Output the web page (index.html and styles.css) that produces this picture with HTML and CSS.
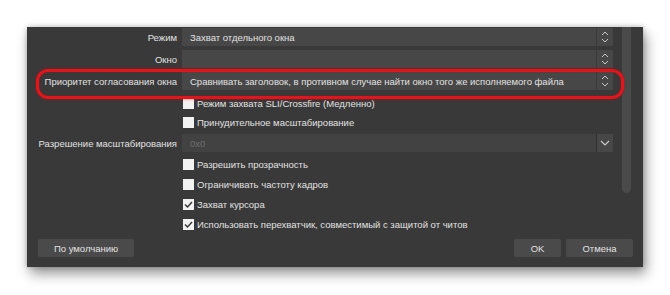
FILE: index.html
```html
<!DOCTYPE html>
<html lang="ru">
<head>
<meta charset="UTF-8" />
<title>Свойства захвата окна</title>
<link rel="stylesheet" href="styles.css">
</head>
<body>

<div class="dialog">
  <div class="scroll-area">
    <div class="form">
      <div class="label">Режим</div>
      <div class="combo">
        <span class="combo-text">Захват отдельного окна</span>
        <span class="combo-btn">
          <svg viewBox="0 0 8 14" width="8" height="14"><path d="M1 5l3-3 3 3M1 9l3 3 3-3" fill="none" stroke="#c8c8c8" stroke-width="1"/></svg>
        </span>
      </div>

      <div class="label">Окно</div>
      <div class="combo">
        <span class="combo-text"></span>
        <span class="combo-btn">
          <svg viewBox="0 0 8 14" width="8" height="14"><path d="M1 5l3-3 3 3M1 9l3 3 3-3" fill="none" stroke="#c8c8c8" stroke-width="1"/></svg>
        </span>
      </div>

      <div class="label highlighted">Приоритет согласования окна</div>
      <div class="combo">
        <span class="combo-text">Сравнивать заголовок, в противном случае найти окно того же исполняемого файла</span>
        <span class="combo-btn">
          <svg viewBox="0 0 8 14" width="8" height="14"><path d="M1 5l3-3 3 3M1 9l3 3 3-3" fill="none" stroke="#c8c8c8" stroke-width="1"/></svg>
        </span>
      </div>

      <label class="check first"><span class="box"></span>Режим захвата SLI/Crossfire (Медленно)</label>
      <label class="check"><span class="box"></span>Принудительное масштабирование</label>

      <div class="label">Разрешение масштабирования</div>
      <div class="combo disabled">
        <span class="combo-text">0x0</span>
        <span class="combo-btn">
          <svg viewBox="0 0 10 8" width="10" height="8"><path d="M1 2l4 4 4-4" fill="none" stroke="#c8c8c8" stroke-width="1.2"/></svg>
        </span>
      </div>

      <label class="check"><span class="box"></span>Разрешить прозрачность</label>
      <label class="check"><span class="box"></span>Ограничивать частоту кадров</label>
      <label class="check"><span class="box checked"><svg viewBox="0 0 11 11" width="11" height="11"><path d="M2 5.5l2.5 2.5 4.5-5" fill="none" stroke="#333" stroke-width="1.4"/></svg></span>Захват курсора</label>
      <label class="check"><span class="box checked"><svg viewBox="0 0 11 11" width="11" height="11"><path d="M2 5.5l2.5 2.5 4.5-5" fill="none" stroke="#333" stroke-width="1.4"/></svg></span>Использовать перехватчик, совместимый с защитой от читов</label>
    </div>

    <div class="scrollbar"><div class="handle"></div></div>
  </div>

  <div class="footer">
    <div class="button wide">По умолчанию</div>
    <div class="spacer"></div>
    <div class="button ok">OK</div>
    <div class="button cancel">Отмена</div>
  </div>
</div>

</body>
</html>
```

FILE: styles.css
```css
/* Reset */
* {
  margin: 0; padding: 0; box-sizing: border-box;
}
html, body {
  width: 670px;
  height: 295px;
  background: #ffffff;
  font-family: 'Liberation Sans', Arial, sans-serif;
  font-size: 9.5px;
  color: #e2e2e2;
  overflow: hidden;
}
body {
  padding: 27px 27px 0 27px;
}

/* окно диалога */
.dialog {
  width: 616px;
  height: 240px;
  background: #393939;
  box-shadow: 3px 7px 12px rgba(0,0,0,0.4), 0 0 5px rgba(0,0,0,0.25);
  display: flex;
  flex-direction: column;
}

.scroll-area {
  display: flex;
  flex: 1;
}

.form {
  flex: 1;
  display: grid;
  grid-template-columns: 150px 1fr;
  column-gap: 5px;
  row-gap: 4px;
  padding-top: 1px;
  align-content: start;
}

.label {
  height: 18px;
  display: flex;
  align-items: center;
  justify-content: flex-end;
  white-space: nowrap;
}

/* красная рамка вокруг строки */
.highlighted {
  position: relative;
}
.highlighted::before {
  content: "";
  position: absolute;
  left: 9px;
  top: -3px;
  width: 582px;
  height: 24px;
  border: 3px solid #e3141b;
  border-radius: 12px;
  box-shadow: 0 0 3px rgba(200,0,0,0.6), inset 0 0 2px rgba(200,0,0,0.5);
  pointer-events: none;
  z-index: 2;
}

.combo {
  height: 18px;
  background: #474747;
  display: flex;
  align-items: center;
}
.combo-text {
  flex: 1;
  padding-left: 8px;
  white-space: nowrap;
  overflow: hidden;
}
.combo-btn {
  width: 17px;
  height: 100%;
  border-left: 1px solid #3b3b3b;
  display: flex;
  align-items: center;
  justify-content: center;
}
.combo.disabled {
  background: #424242;
}
.combo.disabled .combo-text {
  color: #6f6f6f;
}
.combo.disabled .combo-btn {
  background: #474747;
  border-left: 1px solid #2f2f2f;
}

.check {
  grid-column: 2;
  height: 16px;
  display: flex;
  align-items: center;
  padding-left: 1px;
  white-space: nowrap;
}
.check.first {
  padding-top: 2px;
}
.box {
  width: 11px;
  height: 11px;
  background: #f2f2f2;
  margin-right: 3px;
  display: flex;
}

.scrollbar {
  width: 9px;
  margin: 0 12px 0 9px;
}
.handle {
  height: 166px;
  background: #4a4a4a;
  border-radius: 0 0 5px 5px;
}

.footer {
  display: flex;
  gap: 5px;
  padding: 0 10px 10px 11px;
}
.spacer {
  flex: 1;
}
.button {
  height: 18px;
  background: #4a4a4a;
  border-radius: 2px;
  display: flex;
  align-items: center;
  justify-content: center;
}
.button.wide {
  width: 96px;
}
.button.ok {
  width: 47px;
}
.button.cancel {
  width: 67px;
}
```
